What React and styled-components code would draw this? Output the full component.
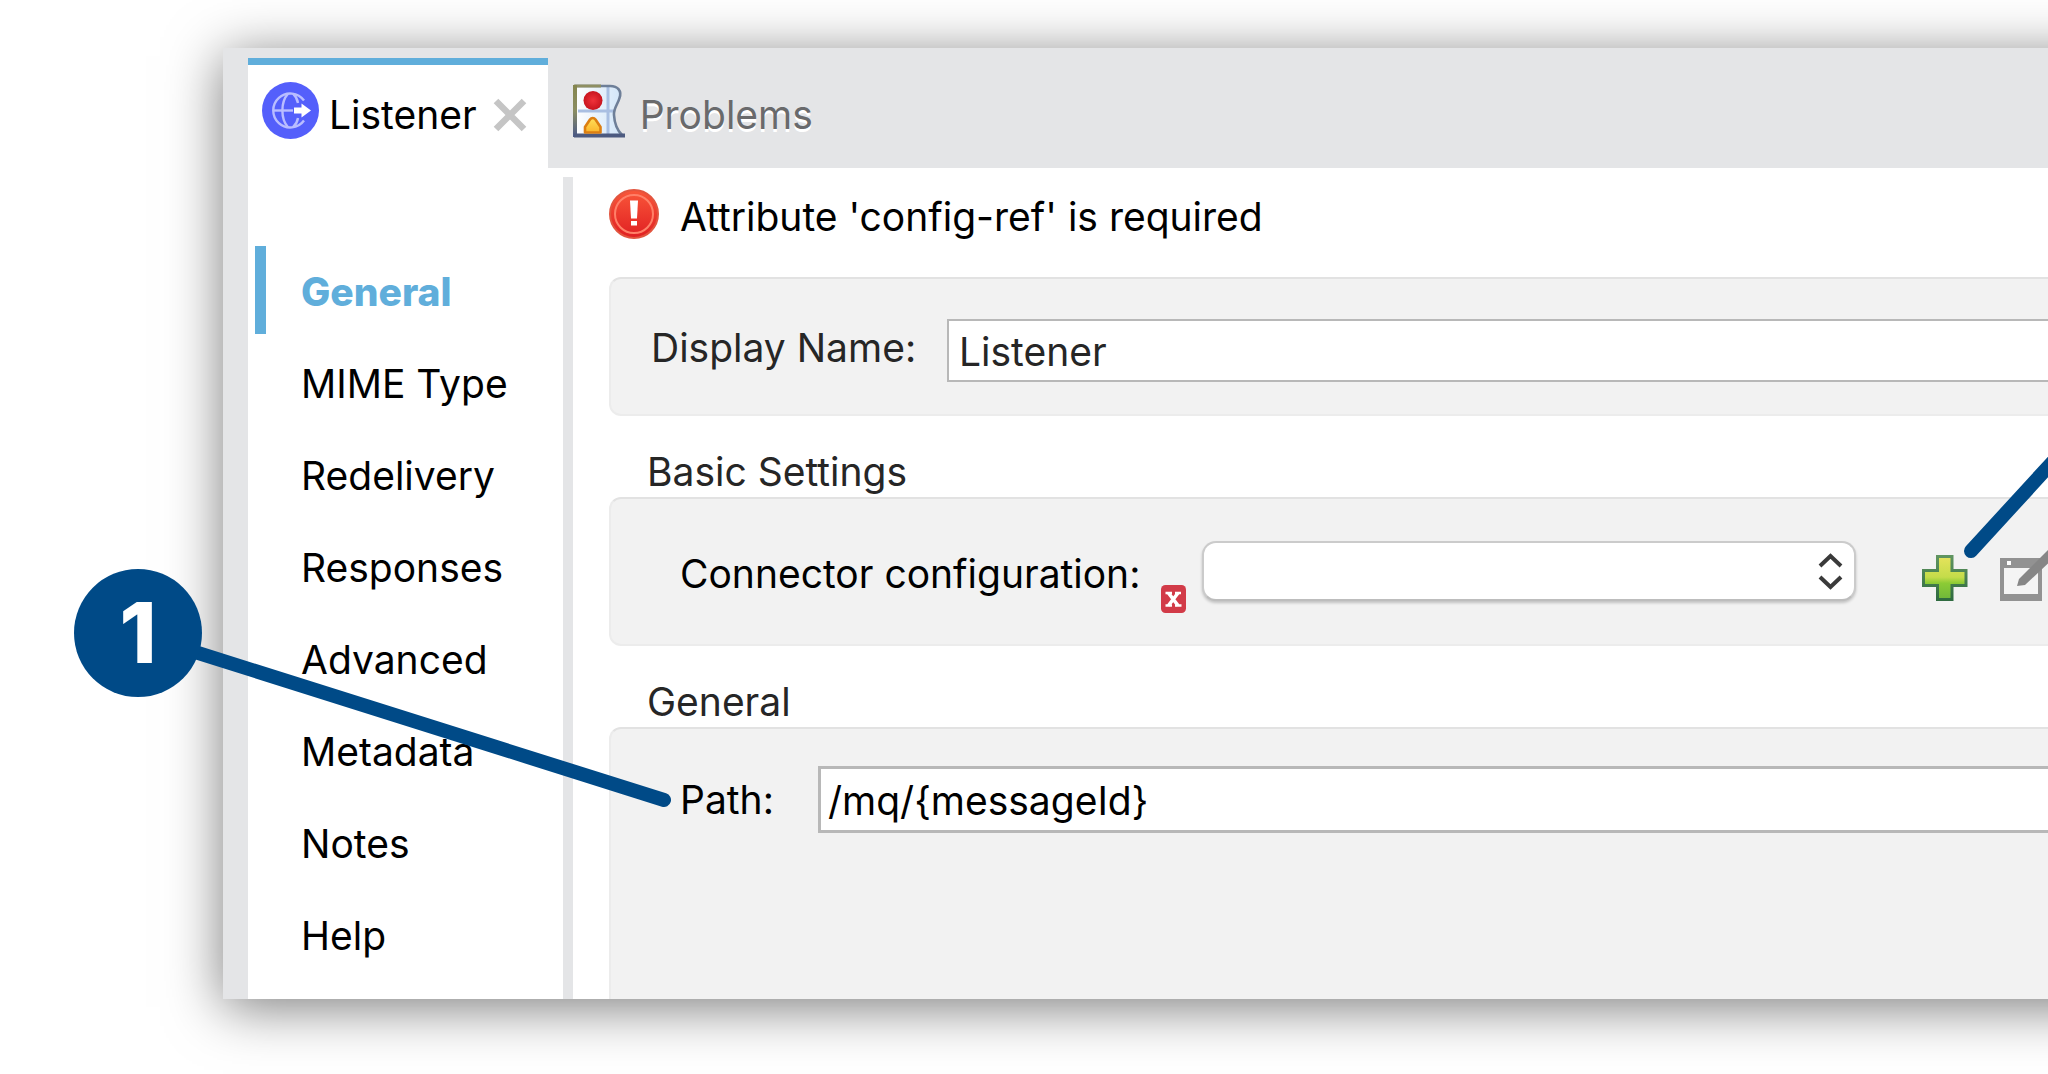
import React from "react";
import styled, { createGlobalStyle } from "styled-components";

const GlobalStyle = createGlobalStyle`
  *, *::before, *::after { box-sizing: border-box; }
  body { margin: 0; background: #fff; }
  button, input, select { font: inherit; color: inherit; }
`;

const Page = styled.main`
  position: relative;
  display: flex;
  flex-direction: column;
  min-height: 100vh;
  padding: 48px 0 75px 223px;
  overflow: hidden;
  font-family: Inter, Roboto, "Liberation Sans", sans-serif;
  font-size: 39px;
  line-height: 46px;
  color: #000;
`;

const Window = styled.div`
  flex: 1;
  display: flex;
  flex-direction: column;
  margin-right: -96px;
  padding-left: 25px;
  background: #e4e5e7;
  box-shadow: 0 8px 52px rgba(0, 0, 0, 0.52);
`;

const TabBar = styled.div`
  display: flex;
  height: 120px;
  padding-top: 10px;
`;

const Tab = styled.div`
  display: flex;
  align-items: center;
  gap: ${(p) => (p.$active ? 10 : 15)}px;
  padding: 0 21px 4px ${(p) => (p.$active ? 14 : 25)}px;
  border-top: 7px solid ${(p) => (p.$active ? "#60aedb" : "transparent")};
  background: ${(p) => (p.$active ? "#fff" : "transparent")};
  color: ${(p) => (p.$active ? "#000" : "#696a6c")};
  text-shadow: ${(p) => (p.$active ? "none" : "0 3px 0 #fff")};

  > svg { margin-bottom: 8px; }
`;

const TabLabel = styled.button`
  padding: 0;
  border: 0;
  background: none;
  text-shadow: inherit;
`;

const IconButton = styled.button`
  display: flex;
  padding: 0;
  border: 0;
  background: none;
`;

const CloseButton = styled(IconButton)`
  margin-left: 6px;
`;

const Body = styled.div`
  flex: 1;
  display: flex;
  background: #fff;
`;

const Sidebar = styled.nav`
  flex: 0 0 325px;
  display: flex;
  flex-direction: column;
  gap: 4px;
  margin-top: 9px;
  padding: 69px 0 0 7px;
  border-right: 10px solid #e4e5e7;
`;

const NavItem = styled.a`
  display: flex;
  align-items: center;
  height: 88px;
  padding: 4px 0 0 35px;
  border-left: 11px solid ${(p) => (p.$active ? "#60aedb" : "transparent")};
  color: ${(p) => (p.$active ? "#60aedb" : "#000")};
  font-weight: ${(p) => (p.$active ? 800 : 400)};
  text-decoration: none;
`;

const Content = styled.div`
  flex: 1;
  display: flex;
  flex-direction: column;
  min-width: 0;
  padding: 21px 0 0 36px;
`;

const Status = styled.div`
  display: flex;
  align-items: center;
  gap: 21px;
  height: 56px;
  margin-bottom: 32px;

  > svg { margin-bottom: 6px; }
`;

const SectionTitle = styled.h2`
  margin: 31px 0 0;
  padding-left: 38px;
  font-size: 39px;
  font-weight: 400;
  line-height: 50px;
  color: #262626;
`;

const Group = styled.section`
  flex: ${(p) => (p.$fill ? "1 0 auto" : "none")};
  padding: ${(p) => p.$pad};
  border: 2px solid #ececec;
  border-top-color: #e2e2e2;
  border-bottom-width: ${(p) => (p.$fill ? 0 : 2)}px;
  border-radius: ${(p) => (p.$fill ? "12px 12px 0 0" : "12px")};
  background: #f2f2f2;
  color: ${(p) => (p.$soft ? "#262626" : "#000")};
`;

const Row = styled.div`
  display: flex;
  align-items: center;
`;

const Label = styled.label`
  flex: 0 0 ${(p) => p.$width}px;
  padding: ${(p) => p.$pad || "0"};
  white-space: nowrap;
`;

const TextInput = styled.input`
  flex: 1;
  min-width: 0;
  height: ${(p) => (p.$thick ? 67 : 63)}px;
  padding: 2px ${(p) => (p.$thick ? 7 : 10)}px 0;
  border: ${(p) => (p.$thick ? 3 : 2)}px solid #b8b8b8;
  border-radius: 0;
  background: #fff;
  outline: none;
`;

const SelectWrap = styled.div`
  position: relative;
  flex: 0 0 654px;
  margin-left: 16px;
`;

const Select = styled.select`
  display: block;
  width: 100%;
  height: 60px;
  padding: 0 56px 0 16px;
  appearance: none;
  border: 2px solid #cbcbcb;
  border-bottom-color: #bdbdbd;
  border-radius: 14px;
  background: #fff;
  box-shadow: 0 2px 3px rgba(0, 0, 0, 0.2);
  outline: none;
`;

const SelectArrows = styled.svg`
  position: absolute;
  top: 12px;
  right: 13px;
  pointer-events: none;
`;

const ErrorMark = styled.svg`
  align-self: flex-end;
  margin-bottom: -12px;
`;

const Tools = styled.div`
  display: flex;
  align-items: flex-end;
  gap: 32px;
  margin-left: 66px;
  padding-top: 6px;
`;

const Callouts = styled.svg`
  position: absolute;
  top: 0;
  left: 0;
  pointer-events: none;
`;

const Badge = styled.div`
  position: absolute;
  top: 569px;
  left: 74px;
  display: flex;
  align-items: center;
  justify-content: center;
  width: 128px;
  height: 128px;
  border-radius: 50%;
  background: #004a87;
  color: #fff;
  font-size: 84px;
  font-weight: 800;
  line-height: 128px;
`;

const GlobeIcon = () => (
  <svg width="57" height="57" viewBox="0 0 57 57" fill="none" aria-hidden="true">
    <circle cx="28.5" cy="28.5" r="28.5" fill="#545ffb" />
    <g stroke="#b9bdff" strokeWidth="2.4">
      <path d="M42 18.500A17 17 0 1 0 42 38.500" />
      <path d="M26 11.700C18.500 20 18.500 37 26 45.200" />
      <path d="M31 11.700C34.500 15 35.500 18 36 21M31 45.200C34.500 42 35.500 39 36 36" />
      <path d="M12 28.500H31" />
    </g>
    <path d="M32 25.500H39.500V21.500L49 28.500L39.500 35.500V31.500H32Z" fill="#fff" />
  </svg>
);

const ProblemsIcon = () => (
  <svg width="52" height="54" viewBox="0 0 52 54" aria-hidden="true">
    <defs>
      <linearGradient id="pb-edge" x1="0" y1="0" x2="0" y2="1">
        <stop offset="0" stopColor="#85864f" />
        <stop offset="0.5" stopColor="#8a8d62" />
        <stop offset="1" stopColor="#49598a" />
      </linearGradient>
      <linearGradient id="pb-sheet" x1="0" y1="0" x2="1" y2="0">
        <stop offset="0" stopColor="#fff" />
        <stop offset="1" stopColor="#cfe4f8" />
      </linearGradient>
      <radialGradient id="pb-red">
        <stop offset="0" stopColor="#f0323a" />
        <stop offset="1" stopColor="#c8151f" />
      </radialGradient>
      <linearGradient id="pb-warn" x1="0" y1="0" x2="0" y2="1">
        <stop offset="0" stopColor="#ffe05a" />
        <stop offset="1" stopColor="#fbb52c" />
      </linearGradient>
    </defs>
    <path d="M1 1H37C45 1 50 6 47.500 14C46 20 41 24 41.500 31C42 40 45 46 51 52H1Z" fill="url(#pb-sheet)" />
    <path d="M5 27H41M35 3V51" stroke="#a9bfe2" strokeWidth="3" />
    <path d="M2 2H37C45 2 49 7 46.500 14C45 20 40.500 24 41 31C41.500 40 44 46 49 51" fill="none" stroke="#6e7f98" strokeWidth="2.600" />
    <path d="M1 2H28" stroke="#8e8f63" strokeWidth="3" />
    <rect x="0" y="1" width="4" height="52" fill="url(#pb-edge)" />
    <path d="M1 51.500H52" stroke="#4c5a80" strokeWidth="4" />
    <circle cx="20" cy="16.500" r="9.500" fill="url(#pb-red)" />
    <path d="M12 48.500V43L17 35.500C18.500 33.500 21 33.500 22.500 35.500L27.500 43V48.500Z" fill="url(#pb-warn)" stroke="#dc7f12" strokeWidth="2.600" strokeLinejoin="round" />
  </svg>
);

const CloseIcon = () => (
  <svg width="34" height="34" viewBox="0 0 34 34" aria-hidden="true">
    <path d="M3 3L31 31M31 3L3 31" stroke="#c5c5c5" strokeWidth="6.500" />
  </svg>
);

const AlertIcon = () => (
  <svg width="50" height="50" viewBox="0 0 50 50" aria-hidden="true">
    <defs>
      <linearGradient id="al-fill" x1="0" y1="0" x2="0" y2="1">
        <stop offset="0" stopColor="#f9573a" />
        <stop offset="1" stopColor="#e01f22" />
      </linearGradient>
    </defs>
    <circle cx="25" cy="25" r="24" fill="url(#al-fill)" stroke="#e2553f" strokeWidth="2" />
    <circle cx="25" cy="25" r="19" fill="none" stroke="#ff8068" strokeWidth="2" />
    <path d="M21 11.500H29L28 29.500H22Z" fill="#fff" />
    <rect x="22" y="32" width="6" height="4.500" fill="#fff" />
  </svg>
);

const PlusIcon = () => (
  <svg width="46" height="46" viewBox="0 0 46 46" aria-hidden="true">
    <defs>
      <linearGradient id="pl-fill" x1="0" y1="0" x2="0" y2="1">
        <stop offset="0" stopColor="#e6e35c" />
        <stop offset="0.480" stopColor="#c4dc4a" />
        <stop offset="0.620" stopColor="#8ccb35" />
        <stop offset="1" stopColor="#6fb73a" />
      </linearGradient>
      <linearGradient id="pl-edge" x1="0" y1="0" x2="0" y2="1">
        <stop offset="0" stopColor="#5f9460" />
        <stop offset="1" stopColor="#2f6b40" />
      </linearGradient>
    </defs>
    <path d="M15.500 1.500H30V15.500H44V30.500H30V44.500H15.500V30.500H1.500V15.500H15.500Z" fill="url(#pl-fill)" stroke="url(#pl-edge)" strokeWidth="3" />
  </svg>
);

const EditIcon = () => (
  <svg width="58" height="54" viewBox="0 0 58 54" aria-hidden="true">
    <path d="M0 11H42V54H0Z" fill="#929292" />
    <path d="M4 21H38V47H4Z" fill="#f4f4f4" />
    <rect x="7" y="14" width="4" height="4" fill="#fff" />
    <path d="M17 39L19 32L48 3L55 10L25 38Z" fill="#868686" />
  </svg>
);

const NAV = ["General", "MIME Type", "Redelivery", "Responses", "Advanced", "Metadata", "Notes", "Help"];

export default function App() {
  return (
    <Page>
      <GlobalStyle />
      <Window>
        <TabBar>
          <Tab $active>
            <GlobeIcon />
            <TabLabel type="button">Listener</TabLabel>
            <CloseButton type="button" aria-label="Close tab">
              <CloseIcon />
            </CloseButton>
          </Tab>
          <Tab>
            <ProblemsIcon />
            <TabLabel type="button">Problems</TabLabel>
          </Tab>
        </TabBar>
        <Body>
          <Sidebar>
            {NAV.map((name, i) => (
              <NavItem key={name} href={`#section-${i}`} $active={i === 0}>
                {name}
              </NavItem>
            ))}
          </Sidebar>
          <Content>
            <Status role="alert">
              <AlertIcon />
              <span>Attribute 'config-ref' is required</span>
            </Status>

            <Group $soft $pad="40px 32px 32px 40px">
              <Row>
                <Label htmlFor="display-name" $width={296} $pad="0 0 6px">Display Name:</Label>
                <TextInput id="display-name" defaultValue="Listener" />
              </Row>
            </Group>

            <SectionTitle>Basic Settings</SectionTitle>
            <Group $pad="42px 0 43px 69px">
              <Row>
                <Label htmlFor="connector" $width={481} $pad="6px 0 0">Connector configuration:</Label>
                <ErrorMark width="25" height="28" viewBox="0 0 25 28" aria-hidden="true">
                  <rect width="25" height="28" rx="4.500" fill="#d23b48" />
                  <path d="M7.500 8L17 20.500M17 8L7.500 20.500" stroke="#fff" strokeWidth="3.600" />
                  <path d="M4.500 8H11M14 8H20M4.500 20.500H11M14 20.500H20.500" stroke="#fff" strokeWidth="2.600" />
                </ErrorMark>
                <SelectWrap>
                  <Select id="connector" defaultValue="">
                    <option value="" aria-label="None" />
                  </Select>
                  <SelectArrows width="25" height="37" viewBox="0 0 25 37" fill="none" aria-hidden="true">
                    <path d="M2 13L12.500 3L23 13M2 24L12.500 34L23 24" stroke="#3a3a3a" strokeWidth="4" />
                  </SelectArrows>
                </SelectWrap>
                <Tools>
                  <IconButton type="button" aria-label="Add configuration">
                    <PlusIcon />
                  </IconButton>
                  <IconButton type="button" aria-label="Edit configuration">
                    <EditIcon />
                  </IconButton>
                </Tools>
              </Row>
            </Group>

            <SectionTitle>General</SectionTitle>
            <Group $fill $pad="37px 32px 0 69px">
              <Row>
                <Label htmlFor="path" $width={138}>Path:</Label>
                <TextInput id="path" defaultValue="/mq/{messageId}" $thick />
              </Row>
            </Group>
          </Content>
        </Body>
      </Window>

      <Callouts width="100%" height="100%" aria-hidden="true">
        <g stroke="#004a87" strokeWidth="14" strokeLinecap="round">
          <line x1="138" y1="634" x2="664" y2="800" />
          <line x1="1971" y1="551" x2="2125" y2="383" />
        </g>
      </Callouts>
      <Badge>1</Badge>
    </Page>
  );
}
